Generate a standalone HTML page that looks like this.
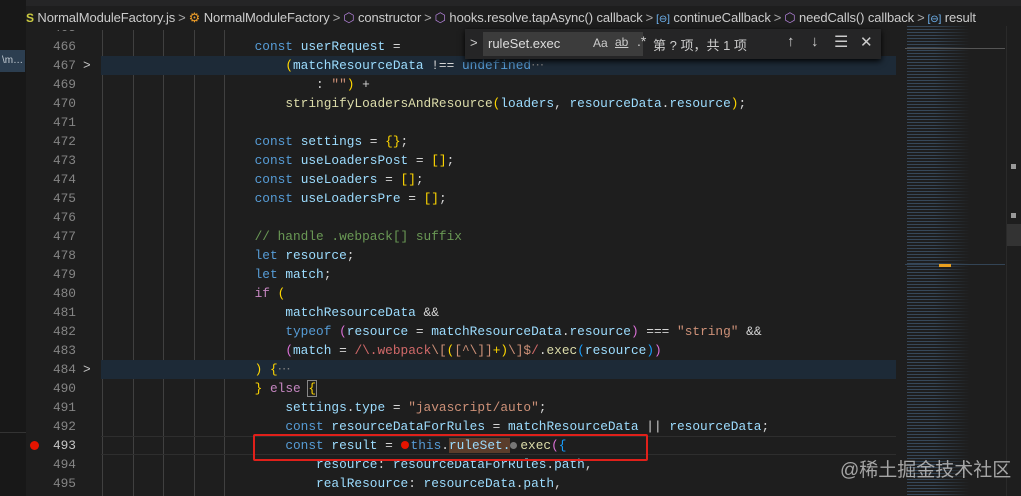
<!DOCTYPE html>
<html><head><meta charset="utf-8"><style>
*{margin:0;padding:0;box-sizing:border-box}
html{overflow:hidden}
body{width:1021px;height:496px;background:#1e1e1e;overflow:hidden;position:relative;font-family:"Liberation Sans",sans-serif}
.side{position:absolute;left:0;top:0;width:26px;height:496px;background:#181818}
.side .lab{position:absolute;left:0;top:50px;width:25px;height:22px;background:#2c3e50;color:#c8d0d8;font-size:10px;line-height:22px;padding-left:2px}
.side .ln{position:absolute;left:0;top:432px;width:26px;height:1px;background:#333}
.tabs{position:absolute;left:26px;top:0;width:995px;height:6px;background:#252526}
.bc{position:absolute;left:26px;top:6px;width:995px;height:24px;background:#1e1e1e;color:#cccccc;font-size:13px;line-height:23px;white-space:nowrap;overflow:hidden;letter-spacing:-0.1px}
.bc .s{color:#cbcb41;font-weight:bold;font-size:12px}
.bc .ch{color:#aaa;margin:0 3px}
.bc .cube{color:#b180d7}
.bc .var{color:#75beff;font-size:10px}
.bc .cls{color:#ee9d28}
.code{position:absolute;left:26px;top:0;width:880px;height:496px;font-family:"Liberation Mono",monospace;font-size:12.8px;color:#d4d4d4}
.l{position:absolute;left:0;width:880px;height:19px;line-height:19px;white-space:pre}
.n{position:absolute;left:0;width:50px;text-align:right;color:#858585}
.n.cur{color:#c6c6c6}
.t{position:absolute;left:75px}
.hl{background:#1d2a37}
.k{color:#569cd6}.p{color:#c586c0}.v{color:#9cdcfe}.f{color:#dcdcaa}.s1{color:#ce9178}.c{color:#6a9955}.y{color:#ffd700}.m{color:#da70d6}.b{color:#179fff}.r{color:#d16969}.g{color:#808080}
.guide{position:absolute;top:30px;width:1px;height:466px;background:#404040}
.find{position:absolute;left:465px;top:29px;width:416px;height:30px;background:#252526;box-shadow:0 2px 6px #000;color:#ccc;font-size:13px}
.find .in{position:absolute;left:18px;top:3px;width:160px;height:24px;background:#3c3c3c;line-height:24px;padding-left:5px;font-size:13px;color:#ddd}
.mini{position:absolute;left:905px;top:26px;width:100px;height:470px;background:#1e1e1e;overflow:hidden}
.sb{position:absolute;left:1006px;top:26px;width:15px;height:470px;background:#1e1e1e;border-left:1px solid #2a2a2a}
.wm{position:absolute;left:840px;top:455px;color:rgba(210,210,210,.75);font-family:"Liberation Sans","Noto Sans CJK SC",sans-serif;font-size:19px;white-space:nowrap}
</style></head><body>
<div class="side"><div class="lab">\m…</div><div class="ln"></div></div>
<div class="code">
<div class="guide" style="left:76px"></div><div class="guide" style="left:107px"></div><div class="guide" style="left:137px"></div><div class="guide" style="left:168px"></div><div class="guide" style="left:198px"></div>
<div class="l" style="top:17.5px"><span class="n">465</span></div>
<div class="l" style="top:36.5px"><span class="n">466</span><span class="t">                    <span class="k">const</span> <span class="v">userRequest</span> =</span></div>
<div class="l hl" style="top:55.5px;left:75px;width:795px"></div>
<div class="l" style="top:55.5px"><span class="n">467</span><span style="position:absolute;left:57px;color:#c5c5c5">&gt;</span><span class="t">                        <span class="y">(</span><span class="v">matchResourceData</span> !== <span class="k">undefined</span><span class="g">⋯</span></span></div>
<div class="l" style="top:74.6px"><span class="n">469</span><span class="t">                            : <span class="s1">""</span><span class="y">)</span> +</span></div>
<div class="l" style="top:93.6px"><span class="n">470</span><span class="t">                        <span class="f">stringifyLoadersAndResource</span><span class="y">(</span><span class="v">loaders</span>, <span class="v">resourceData</span>.<span class="v">resource</span><span class="y">)</span>;</span></div>
<div class="l" style="top:112.7px"><span class="n">471</span></div>
<div class="l" style="top:131.7px"><span class="n">472</span><span class="t">                    <span class="k">const</span> <span class="v">settings</span> = <span class="y">{}</span>;</span></div>
<div class="l" style="top:150.7px"><span class="n">473</span><span class="t">                    <span class="k">const</span> <span class="v">useLoadersPost</span> = <span class="y">[]</span>;</span></div>
<div class="l" style="top:169.8px"><span class="n">474</span><span class="t">                    <span class="k">const</span> <span class="v">useLoaders</span> = <span class="y">[]</span>;</span></div>
<div class="l" style="top:188.8px"><span class="n">475</span><span class="t">                    <span class="k">const</span> <span class="v">useLoadersPre</span> = <span class="y">[]</span>;</span></div>
<div class="l" style="top:207.9px"><span class="n">476</span></div>
<div class="l" style="top:226.9px"><span class="n">477</span><span class="t">                    <span class="c">// handle .webpack[] suffix</span></span></div>
<div class="l" style="top:245.9px"><span class="n">478</span><span class="t">                    <span class="k">let</span> <span class="v">resource</span>;</span></div>
<div class="l" style="top:265px"><span class="n">479</span><span class="t">                    <span class="k">let</span> <span class="v">match</span>;</span></div>
<div class="l" style="top:284px"><span class="n">480</span><span class="t">                    <span class="p">if</span> <span class="y">(</span></span></div>
<div class="l" style="top:303px"><span class="n">481</span><span class="t">                        <span class="v">matchResourceData</span> &amp;&amp;</span></div>
<div class="l" style="top:322.1px"><span class="n">482</span><span class="t">                        <span class="k">typeof</span> <span class="m">(</span><span class="v">resource</span> = <span class="v">matchResourceData</span>.<span class="v">resource</span><span class="m">)</span> === <span class="s1">"string"</span> &amp;&amp;</span></div>
<div class="l" style="top:341.1px"><span class="n">483</span><span class="t">                        <span class="m">(</span><span class="v">match</span> = <span class="r">/\.</span><span class="r">webpack</span><span class="s1">\[</span><span class="y">(</span><span class="s1">[^\]]</span><span class="y">+)</span><span class="s1">\]$</span><span class="r">/</span>.<span class="f">exec</span><span class="b">(</span><span class="v">resource</span><span class="b">)</span><span class="m">)</span></span></div>
<div class="l hl" style="top:360.2px;left:75px;width:795px"></div>
<div class="l" style="top:360.2px"><span class="n">484</span><span style="position:absolute;left:57px;color:#c5c5c5">&gt;</span><span class="t">                    <span class="y">)</span> <span class="y">{</span><span class="g">⋯</span></span></div>
<div class="l" style="top:379.2px"><span class="n">490</span><span class="t">                    <span class="y">}</span> <span class="p">else</span> <span class="y" style="outline:1px solid #888">{</span></span></div>
<div class="l" style="top:398.2px"><span class="n">491</span><span class="t">                        <span class="v">settings</span>.<span class="v">type</span> = <span class="s1">"javascript/auto"</span>;</span></div>
<div class="l" style="top:417.3px"><span class="n">492</span><span class="t">                        <span class="k">const</span> <span class="v">resourceDataForRules</span> = <span class="v">matchResourceData</span> || <span class="v">resourceData</span>;</span></div>
<div class="l" style="top:436.3px;left:75px;width:795px;border-top:1px solid #2e2e2e;border-bottom:1px solid #2e2e2e"></div>
<div class="l" style="top:436.3px"><span style="position:absolute;left:4px;top:5px;width:9px;height:9px;border-radius:50%;background:#e51400"></span><span class="n cur">493</span><span class="t">                        <span class="k">const</span> <span class="v">result</span> = <span style="display:inline-block;width:8px;height:8px;border-radius:50%;background:#e51400;margin-right:2px"></span><span class="k">this</span>.<span class="v" style="background:#5a3d2b">ruleSet.</span><span style="display:inline-block;width:7px;height:7px;border-radius:50%;background:#777;margin:0 3px 0 0"></span><span class="f">exec</span><span class="m">(</span><span class="b">{</span></span></div>
<div class="l" style="top:455.4px"><span class="n">494</span><span class="t">                            <span class="v">resource</span>: <span class="v">resourceDataForRules</span>.<span class="v">path</span>,</span></div>
<div class="l" style="top:474.4px"><span class="n">495</span><span class="t">                            <span class="v">realResource</span>: <span class="v">resourceData</span>.<span class="v">path</span>,</span></div>
</div>
<div style="position:absolute;left:253px;top:434px;width:395px;height:27px;border:2px solid #e0201a;border-radius:2px"></div>
<div class="tabs"></div>
<div class="bc"><span class="s">S</span> NormalModuleFactory.js<span class="ch">&gt;</span><span class="cls">⚙</span> NormalModuleFactory<span class="ch">&gt;</span><span class="cube">⬡</span> constructor<span class="ch">&gt;</span><span class="cube">⬡</span> hooks.resolve.tapAsync() callback<span class="ch">&gt;</span><span class="var">[⊖]</span> continueCallback<span class="ch">&gt;</span><span class="cube">⬡</span> needCalls() callback<span class="ch">&gt;</span><span class="var">[⊖]</span> result</div>
<div class="find"><span style="position:absolute;left:5px;top:6px;color:#ccc">&gt;</span><div class="in">ruleSet.exec</div>
<span style="position:absolute;left:128px;top:7px;font-size:12px">Aa</span><span style="position:absolute;left:150px;top:6px;font-size:12px;text-decoration:underline">ab</span><span style="position:absolute;left:172px;top:4px;font-size:14px">.*</span>
<span style="position:absolute;left:188px;top:6px;font-family:'Liberation Sans','Noto Sans CJK SC',sans-serif">第 ? 项，共 1 项</span>
<span style="position:absolute;left:322px;top:4px;font-size:15px">↑</span><span style="position:absolute;left:346px;top:4px;font-size:15px">↓</span><span style="position:absolute;left:369px;top:3px;font-size:16px">☰</span><span style="position:absolute;left:395px;top:4px;font-size:15px">✕</span></div>
<div class="mini">
<div style="position:absolute;left:2px;top:0;width:90px;height:470px;background:repeating-linear-gradient(180deg,rgba(100,150,200,.35) 0 1px,transparent 1px 3px);-webkit-mask:linear-gradient(90deg,#000 0 30%,transparent 70%)"></div>
<div style="position:absolute;left:0;top:22px;width:100px;height:1px;background:#555"></div>
<div style="position:absolute;left:0;top:238px;width:100px;height:1px;background:#345"></div>
<div style="position:absolute;left:34px;top:238px;width:12px;height:3px;background:#e8a020"></div>
</div>
<div class="sb"><div style="position:absolute;left:4px;top:138px;width:5px;height:5px;background:#999"></div><div style="position:absolute;left:4px;top:187px;width:5px;height:5px;background:#999"></div><div style="position:absolute;left:0;top:198px;width:15px;height:22px;background:#333"></div></div>
<div class="wm">@稀土掘金技术社区</div>
</body></html>
